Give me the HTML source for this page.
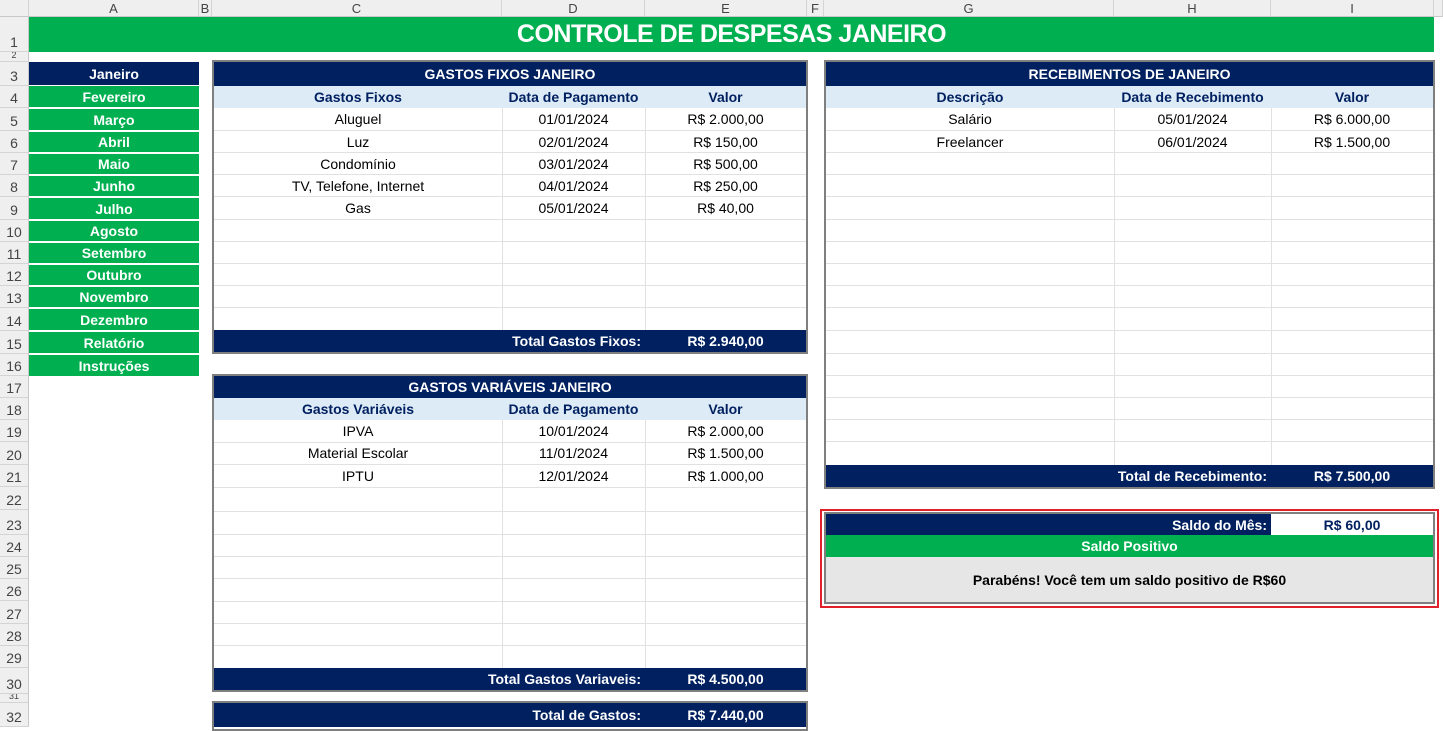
<!DOCTYPE html>
<html><head><meta charset="utf-8"><style>
*{margin:0;padding:0;box-sizing:border-box}
body{width:1443px;height:727px;overflow:hidden;background:#fff;font-family:"Liberation Sans",sans-serif;font-size:14px;color:#000;position:relative}
.a{position:absolute}
.c{position:absolute;display:flex;align-items:center;justify-content:center;white-space:nowrap;overflow:hidden}
.r{justify-content:flex-end;padding-right:4px}
.nav{background:#002060;color:#fff;font-weight:bold}
.grn{background:#00b050;color:#fff;font-weight:bold}
.sub{background:#ddebf7;color:#002060;font-weight:bold}
.box{position:absolute;border:2px solid #7f7f7f}
.hl{position:absolute;height:1px;background:#e1e1e1}
.vl{position:absolute;width:1px;background:#e1e1e1}
.ch{position:absolute;top:0;height:17px;background:#efefef;border-right:1px solid #d4d4d4;border-bottom:1px solid #c8c8c8;color:#444;font-size:13px;display:flex;align-items:center;justify-content:center}
.rh{position:absolute;left:0;width:29px;background:#efefef;border-bottom:1px solid #d4d4d4;border-right:1px solid #c8c8c8;color:#444;font-size:14px;display:flex;align-items:flex-end;justify-content:center;padding-bottom:1px;overflow:hidden}
</style></head><body>
<div class="ch" style="left:0;width:29px"></div>
<div class="ch" style="left:29px;width:170px">A</div>
<div class="ch" style="left:199px;width:13px">B</div>
<div class="ch" style="left:212px;width:290px">C</div>
<div class="ch" style="left:502px;width:143px">D</div>
<div class="ch" style="left:645px;width:162px">E</div>
<div class="ch" style="left:807px;width:17px">F</div>
<div class="ch" style="left:824px;width:290px">G</div>
<div class="ch" style="left:1114px;width:157px">H</div>
<div class="ch" style="left:1271px;width:163px">I</div>
<div class="ch" style="left:1434px;width:9px"></div>
<div class="rh" style="top:17px;height:35px">1</div>
<div class="rh" style="top:52px;height:10px;font-size:9px">2</div>
<div class="rh" style="top:62px;height:24px">3</div>
<div class="rh" style="top:86px;height:22px">4</div>
<div class="rh" style="top:108px;height:23px">5</div>
<div class="rh" style="top:131px;height:22px">6</div>
<div class="rh" style="top:153px;height:22px">7</div>
<div class="rh" style="top:175px;height:22px">8</div>
<div class="rh" style="top:197px;height:23px">9</div>
<div class="rh" style="top:220px;height:22px">10</div>
<div class="rh" style="top:242px;height:22px">11</div>
<div class="rh" style="top:264px;height:22px">12</div>
<div class="rh" style="top:286px;height:22px">13</div>
<div class="rh" style="top:308px;height:23px">14</div>
<div class="rh" style="top:331px;height:23px">15</div>
<div class="rh" style="top:354px;height:22px">16</div>
<div class="rh" style="top:376px;height:22px">17</div>
<div class="rh" style="top:398px;height:22px">18</div>
<div class="rh" style="top:420px;height:22px">19</div>
<div class="rh" style="top:442px;height:23px">20</div>
<div class="rh" style="top:465px;height:22px">21</div>
<div class="rh" style="top:487px;height:23px">22</div>
<div class="rh" style="top:510px;height:25px">23</div>
<div class="rh" style="top:535px;height:22px">24</div>
<div class="rh" style="top:557px;height:22px">25</div>
<div class="rh" style="top:579px;height:22px">26</div>
<div class="rh" style="top:601px;height:23px">27</div>
<div class="rh" style="top:624px;height:22px">28</div>
<div class="rh" style="top:646px;height:22px">29</div>
<div class="rh" style="top:668px;height:26px">30</div>
<div class="rh" style="top:694px;height:9px;font-size:9px">31</div>
<div class="rh" style="top:703px;height:24px">32</div>

<div class="c grn" style="left:29px;top:17px;width:1405px;height:35px;font-size:25px;letter-spacing:-0.5px">CONTROLE DE DESPESAS JANEIRO</div>

<div class="c nav" style="left:29px;top:62px;width:170px;height:23px">Janeiro</div>
<div class="c grn" style="left:29px;top:86px;width:170px;height:21px">Fevereiro</div>
<div class="c grn" style="left:29px;top:109px;width:170px;height:21px">Março</div>
<div class="c grn" style="left:29px;top:132px;width:170px;height:20px">Abril</div>
<div class="c grn" style="left:29px;top:154px;width:170px;height:20px">Maio</div>
<div class="c grn" style="left:29px;top:176px;width:170px;height:20px">Junho</div>
<div class="c grn" style="left:29px;top:198px;width:170px;height:21px">Julho</div>
<div class="c grn" style="left:29px;top:221px;width:170px;height:20px">Agosto</div>
<div class="c grn" style="left:29px;top:243px;width:170px;height:20px">Setembro</div>
<div class="c grn" style="left:29px;top:265px;width:170px;height:20px">Outubro</div>
<div class="c grn" style="left:29px;top:287px;width:170px;height:20px">Novembro</div>
<div class="c grn" style="left:29px;top:309px;width:170px;height:21px">Dezembro</div>
<div class="c grn" style="left:29px;top:332px;width:170px;height:21px">Relatório</div>
<div class="c grn" style="left:29px;top:355px;width:170px;height:21px">Instruções</div>

<div class="box" style="left:212px;top:60px;width:596px;height:294px"></div>
<div class="c nav" style="left:214px;top:62px;width:592px;height:24px">GASTOS FIXOS JANEIRO</div>
<div class="c sub" style="left:214px;top:86px;width:288px;height:22px">Gastos Fixos</div>
<div class="c sub" style="left:502px;top:86px;width:143px;height:22px">Data de Pagamento</div>
<div class="c sub" style="left:645px;top:86px;width:161px;height:22px">Valor</div>
<div class="vl" style="left:502px;top:108px;height:222px"></div>
<div class="vl" style="left:645px;top:108px;height:222px"></div>
<div class="hl" style="left:214px;top:130px;width:592px"></div>
<div class="hl" style="left:214px;top:152px;width:592px"></div>
<div class="hl" style="left:214px;top:174px;width:592px"></div>
<div class="hl" style="left:214px;top:196px;width:592px"></div>
<div class="hl" style="left:214px;top:219px;width:592px"></div>
<div class="hl" style="left:214px;top:241px;width:592px"></div>
<div class="hl" style="left:214px;top:263px;width:592px"></div>
<div class="hl" style="left:214px;top:285px;width:592px"></div>
<div class="hl" style="left:214px;top:307px;width:592px"></div>
<div class="c" style="left:214px;top:108px;width:288px;height:22px">Aluguel</div>
<div class="c" style="left:502px;top:108px;width:143px;height:22px">01/01/2024</div>
<div class="c" style="left:645px;top:108px;width:161px;height:22px">R$ 2.000,00</div>
<div class="c" style="left:214px;top:131px;width:288px;height:22px">Luz</div>
<div class="c" style="left:502px;top:131px;width:143px;height:22px">02/01/2024</div>
<div class="c" style="left:645px;top:131px;width:161px;height:22px">R$ 150,00</div>
<div class="c" style="left:214px;top:153px;width:288px;height:22px">Condomínio</div>
<div class="c" style="left:502px;top:153px;width:143px;height:22px">03/01/2024</div>
<div class="c" style="left:645px;top:153px;width:161px;height:22px">R$ 500,00</div>
<div class="c" style="left:214px;top:175px;width:288px;height:22px">TV, Telefone, Internet</div>
<div class="c" style="left:502px;top:175px;width:143px;height:22px">04/01/2024</div>
<div class="c" style="left:645px;top:175px;width:161px;height:22px">R$ 250,00</div>
<div class="c" style="left:214px;top:197px;width:288px;height:22px">Gas</div>
<div class="c" style="left:502px;top:197px;width:143px;height:22px">05/01/2024</div>
<div class="c" style="left:645px;top:197px;width:161px;height:22px">R$ 40,00</div>
<div class="c nav r" style="left:214px;top:330px;width:431px;height:22px">Total Gastos Fixos:</div>
<div class="c nav" style="left:645px;top:330px;width:161px;height:22px">R$ 2.940,00</div>

<div class="box" style="left:212px;top:374px;width:596px;height:318px"></div>
<div class="c nav" style="left:214px;top:376px;width:592px;height:22px">GASTOS VARIÁVEIS JANEIRO</div>
<div class="c sub" style="left:214px;top:398px;width:288px;height:22px">Gastos Variáveis</div>
<div class="c sub" style="left:502px;top:398px;width:143px;height:22px">Data de Pagamento</div>
<div class="c sub" style="left:645px;top:398px;width:161px;height:22px">Valor</div>
<div class="vl" style="left:502px;top:420px;height:248px"></div>
<div class="vl" style="left:645px;top:420px;height:248px"></div>
<div class="hl" style="left:214px;top:442px;width:592px"></div>
<div class="hl" style="left:214px;top:464px;width:592px"></div>
<div class="hl" style="left:214px;top:487px;width:592px"></div>
<div class="hl" style="left:214px;top:511px;width:592px"></div>
<div class="hl" style="left:214px;top:534px;width:592px"></div>
<div class="hl" style="left:214px;top:556px;width:592px"></div>
<div class="hl" style="left:214px;top:578px;width:592px"></div>
<div class="hl" style="left:214px;top:601px;width:592px"></div>
<div class="hl" style="left:214px;top:623px;width:592px"></div>
<div class="hl" style="left:214px;top:645px;width:592px"></div>
<div class="c" style="left:214px;top:420px;width:288px;height:22px">IPVA</div>
<div class="c" style="left:502px;top:420px;width:143px;height:22px">10/01/2024</div>
<div class="c" style="left:645px;top:420px;width:161px;height:22px">R$ 2.000,00</div>
<div class="c" style="left:214px;top:442px;width:288px;height:22px">Material Escolar</div>
<div class="c" style="left:502px;top:442px;width:143px;height:22px">11/01/2024</div>
<div class="c" style="left:645px;top:442px;width:161px;height:22px">R$ 1.500,00</div>
<div class="c" style="left:214px;top:465px;width:288px;height:22px">IPTU</div>
<div class="c" style="left:502px;top:465px;width:143px;height:22px">12/01/2024</div>
<div class="c" style="left:645px;top:465px;width:161px;height:22px">R$ 1.000,00</div>
<div class="c nav r" style="left:214px;top:668px;width:431px;height:22px">Total Gastos Variaveis:</div>
<div class="c nav" style="left:645px;top:668px;width:161px;height:22px">R$ 4.500,00</div>

<div class="box" style="left:212px;top:701px;width:596px;height:30px"></div>
<div class="c nav r" style="left:214px;top:703px;width:431px;height:24px">Total de Gastos:</div>
<div class="c nav" style="left:645px;top:703px;width:161px;height:24px">R$ 7.440,00</div>

<div class="box" style="left:824px;top:60px;width:611px;height:429px"></div>
<div class="c nav" style="left:826px;top:62px;width:607px;height:24px">RECEBIMENTOS DE JANEIRO</div>
<div class="c sub" style="left:826px;top:86px;width:288px;height:22px">Descrição</div>
<div class="c sub" style="left:1114px;top:86px;width:157px;height:22px">Data de Recebimento</div>
<div class="c sub" style="left:1271px;top:86px;width:162px;height:22px">Valor</div>
<div class="vl" style="left:1114px;top:108px;height:357px"></div>
<div class="vl" style="left:1271px;top:108px;height:357px"></div>
<div class="hl" style="left:826px;top:130px;width:607px"></div>
<div class="hl" style="left:826px;top:152px;width:607px"></div>
<div class="hl" style="left:826px;top:174px;width:607px"></div>
<div class="hl" style="left:826px;top:196px;width:607px"></div>
<div class="hl" style="left:826px;top:219px;width:607px"></div>
<div class="hl" style="left:826px;top:241px;width:607px"></div>
<div class="hl" style="left:826px;top:263px;width:607px"></div>
<div class="hl" style="left:826px;top:285px;width:607px"></div>
<div class="hl" style="left:826px;top:307px;width:607px"></div>
<div class="hl" style="left:826px;top:330px;width:607px"></div>
<div class="hl" style="left:826px;top:353px;width:607px"></div>
<div class="hl" style="left:826px;top:375px;width:607px"></div>
<div class="hl" style="left:826px;top:397px;width:607px"></div>
<div class="hl" style="left:826px;top:419px;width:607px"></div>
<div class="hl" style="left:826px;top:441px;width:607px"></div>
<div class="c" style="left:826px;top:108px;width:288px;height:22px">Salário</div>
<div class="c" style="left:1114px;top:108px;width:157px;height:22px">05/01/2024</div>
<div class="c" style="left:1271px;top:108px;width:162px;height:22px">R$ 6.000,00</div>
<div class="c" style="left:826px;top:131px;width:288px;height:22px">Freelancer</div>
<div class="c" style="left:1114px;top:131px;width:157px;height:22px">06/01/2024</div>
<div class="c" style="left:1271px;top:131px;width:162px;height:22px">R$ 1.500,00</div>
<div class="c nav r" style="left:826px;top:465px;width:445px;height:22px">Total de Recebimento:</div>
<div class="c nav" style="left:1271px;top:465px;width:162px;height:22px">R$ 7.500,00</div>

<div class="a" style="left:820px;top:509px;width:619px;height:99px;border:2px solid #e0202a"></div>
<div class="box" style="left:824px;top:512px;width:611px;height:92px"></div>
<div class="c nav r" style="left:826px;top:514px;width:445px;height:21px">Saldo do Mês:</div>
<div class="c" style="left:1271px;top:514px;width:162px;height:21px;background:#fff;color:#002060;font-weight:bold">R$ 60,00</div>
<div class="c grn" style="left:826px;top:535px;width:607px;height:22px">Saldo Positivo</div>
<div class="c" style="left:826px;top:557px;width:607px;height:45px;background:#e7e6e6;font-weight:bold">Parabéns! Você tem um saldo positivo de R$60</div>
</body></html>
